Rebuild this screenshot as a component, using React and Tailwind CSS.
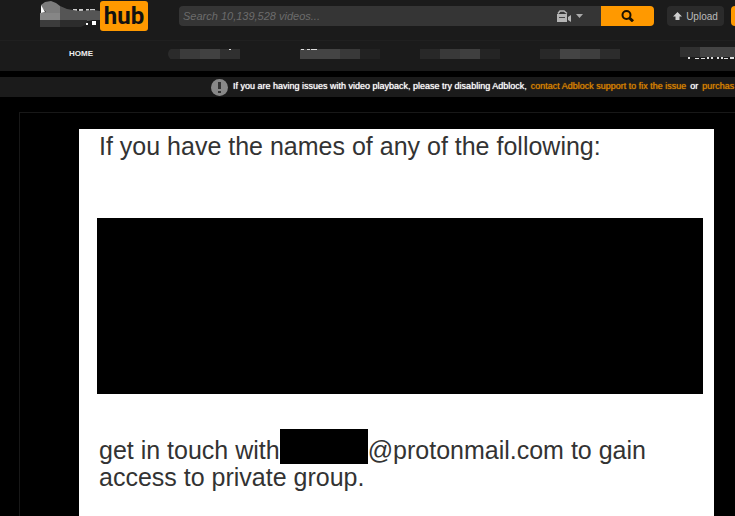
import clsx from 'clsx'

function MaskedWord() {
  return (
    <svg className="block shrink-0" width="60" height="28" viewBox="0 0 60 28" aria-hidden="true">
      <path d="M33 8h4v3h-4zM39 8h4v3h-4zM46 8h3v3h-3zM50 8h5v3h-5z" fill="#ccc" />
      <path d="M20 5l7 3 12 2 14-1 7 1v9h-7l-5 1H20z" fill="#555" />
      <path d="M1 4L5 1l6-1 5 2 4 3v9H0v-2l6-1-4-4z" fill="#7c7c7c" />
      <path d="M0 12h20v7H0z" fill="#868686" />
      <path d="M0 19h20v7H0z" fill="#3c3c3c" />
      <path d="M20 19h27v4l-6 3H20z" fill="#2c2c2c" />
      <path d="M1 4l4 7-4 1z" fill="#fff" />
      <path d="M52 20h4v4h-4zM46 22h2v2h-2z" fill="#fff" />
    </svg>
  )
}

function CameraIcon() {
  return (
    <svg width="15" height="12" viewBox="0 0 15 12" aria-hidden="true">
      <path d="M1 3.500L3 1h4l3 2.500" fill="none" stroke="#b5b5b5" strokeWidth="1.500" />
      <path d="M0 4h10v8H0zM11 7l3-2v7l-3-2z" fill="#b5b5b5" />
      <path d="M2 7h6v1H2z" fill="#444" />
    </svg>
  )
}

function SearchIcon() {
  return (
    <svg width="13" height="12" viewBox="0 0 13 12" fill="none" stroke="#1b1200" aria-hidden="true">
      <circle cx="5.5" cy="5" r="4" strokeWidth="2" />
      <path d="M8.5 8l3.5 3.3" strokeWidth="3" />
    </svg>
  )
}

function UploadIcon() {
  return (
    <svg width="9" height="8" viewBox="0 0 9 8" fill="#d0d0d0" aria-hidden="true">
      <path d="M4.500 0L9 4.500H6.500V8h-4V4.500H0z" />
    </svg>
  )
}

// each item is a row of blocks: [x, width, fill]
const navMasks = [
  { blocks: [[0, 12, '#2b2b2b'], [12, 20, '#3b3b3b'], [32, 20, '#414141'], [52, 20, '#303030']], round: true, speck: 'M61 1h2v1h-2z' },
  { blocks: [[0, 40, '#444'], [40, 20, '#393939'], [60, 20, '#222']], speck: 'M1 1h3v1H1zM7 1h3v1H7zM11 1h6v1h-6z' },
  { blocks: [[0, 20, '#282828'], [20, 20, '#393939'], [40, 20, '#3f3f3f'], [60, 20, '#242424']] },
  { blocks: [[0, 20, '#282828'], [20, 20, '#444'], [40, 20, '#3e3e3e'], [60, 20, '#2c2c2c']] },
]

function NavMask({ blocks, round, speck }) {
  return (
    <svg className={clsx('block h-3 w-20 shrink-0', round && 'rounded-l-full')} viewBox="0 0 80 12" aria-hidden="true">
      {blocks.map(([x, w, fill]) => (
        <rect key={x} x={x} y="1" width={w} height="10" fill={fill} />
      ))}
      {speck && <path d={speck} fill="#ddd" />}
    </svg>
  )
}

function Header() {
  return (
    <header className="bg-[#1b1b1b]">
      <div className="flex h-10 items-start pl-10">
        <a href="#home" aria-label="Home" className="mt-px flex shrink-0 items-start">
          <MaskedWord />
          <span className="flex h-[30px] w-12 items-center justify-center rounded-[3px] bg-[#f90] font-[Roboto,sans-serif] text-2xl font-bold text-[#111]">
            hub
          </span>
        </a>
        <form className="ml-[31px] mt-1.5 flex h-5 min-w-0 flex-1" onSubmit={e => e.preventDefault()}>
          <input
            type="search"
            aria-label="Search videos"
            placeholder="Search 10,139,528 videos..."
            className="min-w-0 flex-1 rounded-l-sm bg-[#353535] pl-1 text-[11px] italic outline-none placeholder:text-[#6c6c6c]"
          />
          <button type="button" aria-label="Video type" className="flex w-12 items-center gap-1 bg-[#353535] pl-1">
            <CameraIcon />
            <svg width="7" height="4" viewBox="0 0 7 4" fill="#aaa" aria-hidden="true"><path d="M0 0h7L3.500 4z" /></svg>
          </button>
          <button type="submit" aria-label="Search" className="flex w-[53px] items-center justify-center rounded-r-sm bg-[#f90]">
            <SearchIcon />
          </button>
        </form>
        <button className="ml-[13px] mt-1.5 flex h-5 w-[57px] shrink-0 items-center justify-center gap-1 rounded-sm bg-[#2b2b2b] text-[10px] text-[#bbb]">
          <UploadIcon />
          Upload
        </button>
        <button aria-label="Sign up" className="ml-[7px] mt-1.5 h-5 w-1 shrink-0 rounded-l-sm bg-[#f90]" />
      </div>

      <nav className="flex h-[31px] items-center overflow-hidden border-t border-[#202020] pl-[69px]">
        <a href="#home" className="mr-[73px] w-[26px] shrink-0 pb-1 text-[8px] font-bold text-[#eee]">HOME</a>
        <div className="flex shrink-0 gap-10 pb-1">
          <div className="mr-3"><NavMask {...navMasks[0]} /></div>
          {navMasks.slice(1).map((mask, i) => (
            <NavMask key={i} {...mask} />
          ))}
        </div>
        <svg className="mb-1 ml-[60px] block shrink-0" width="55" height="14" viewBox="0 0 55 14" aria-hidden="true">
          <path d="M0 0h20v10H0z" fill="#303030" />
          <path d="M20 0h35v10H20z" fill="#444" />
          <path d="M8 10h2v2H8zM15 11h4v1h-4zM21 11h4v1h-4zM27 10h2v2h-2zM31 10h2v2h-2zM37 10h2v2h-2zM41 10h2v2h-2zM44 11h4v1h-4zM50 10h4v2h-4z" fill="#ddd" />
        </svg>
      </nav>
    </header>
  )
}

function Notice() {
  return (
    <div className="mt-1.5 flex h-5 items-center overflow-hidden whitespace-nowrap bg-[#1b1b1b] pl-[211px] text-[9px] text-white">
      <svg className="mr-[5px] shrink-0" width="17" height="17" viewBox="0 0 17 17" aria-hidden="true">
        <circle cx="8.500" cy="8.500" r="8.500" fill="#888" />
        <path d="M7 3h3v7H7zM7 12h3v2H7z" fill="#333" />
      </svg>
      <p className="flex gap-1 [text-shadow:0_0_1px_currentColor]">
        <span>If you are having issues with video playback, please try disabling Adblock,</span>
        <a href="#support" className="text-[#d98200]">contact Adblock support to fix the issue</a>
        <span>or</span>
        <a href="#purchase" className="text-[#d98200]">purchas</a>
      </p>
    </div>
  )
}

export default function App() {
  return (
    <div className="flex min-h-screen flex-col overflow-hidden bg-black font-['Liberation_Sans',Arial,sans-serif]">
      <Header />
      <Notice />
      <main className="ml-[19px] mt-[15px] flex flex-1 flex-col border-l border-t border-[#181818] pl-[59px] pr-[21px] pt-4">
        <article className="flex-1 bg-white pl-[18px] pr-[11px] pt-1 text-[25px]/[26px] text-[#333]">
          <p className="pl-0.5">If you have the names of any of the following:</p>
          <div className="mt-[59px] h-44 bg-black" />
          <p className="mt-[35px] pl-0.5">
            get in touch with
            <span className="inline-block h-[35px] w-[88px] bg-black align-[-5px]" />
            @protonmail.com to gain
            <br />
            access to private group.
          </p>
        </article>
      </main>
    </div>
  )
}
